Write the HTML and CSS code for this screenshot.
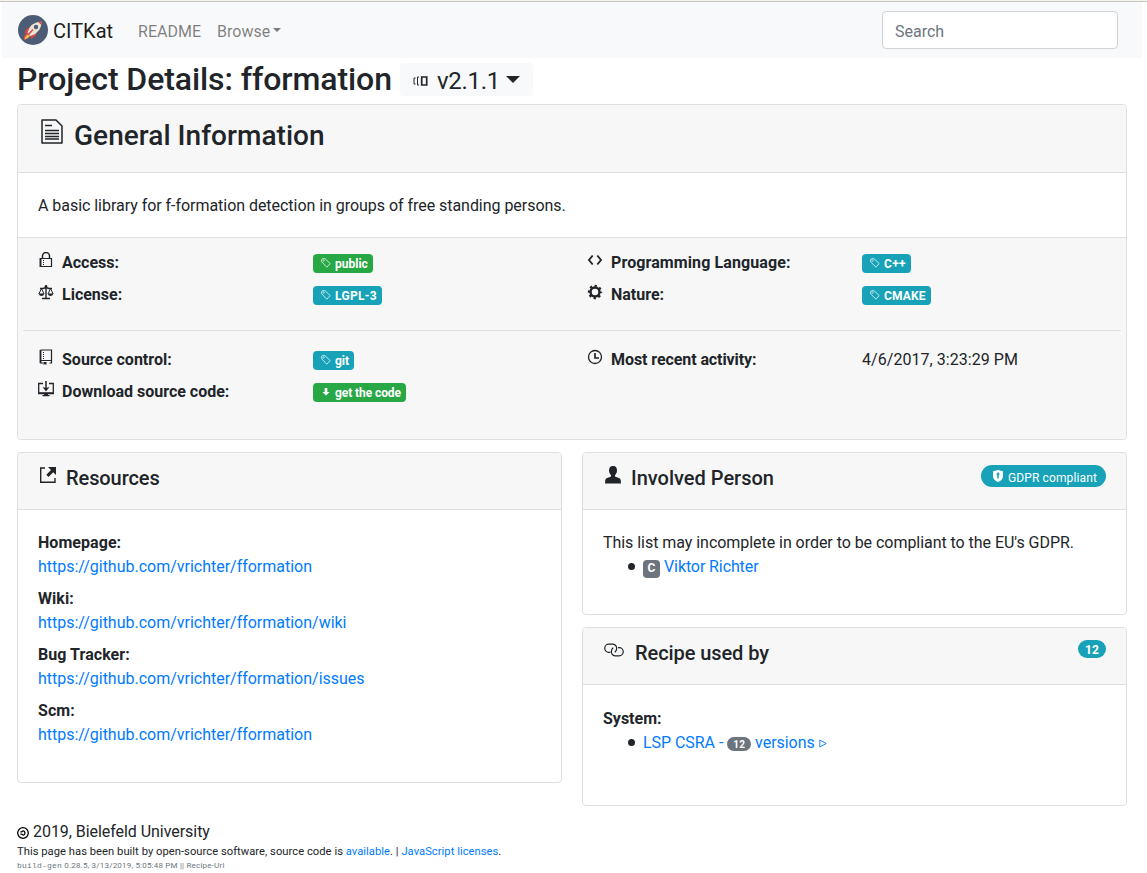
FILE: index.html
```html
<!DOCTYPE html>
<html lang="en">
<head>
<meta charset="utf-8">
<title>CITKat - fformation</title>
<link rel="stylesheet" href="styles.css">
</head>
<body>
<svg class="defs" aria-hidden="true">
  <symbol id="tag" viewBox="0 0 10 10"><path d="M.7 3.8V1.7Q.7.7 1.7.7H4L9.2 5.6 5.8 9.2Z" fill="none" stroke="currentColor" stroke-width=".75"/><circle cx="2.6" cy="2.6" r=".7" fill="none" stroke="currentColor" stroke-width=".5"/></symbol>
</svg>
<nav class="navbar">
  <a class="brand"><svg class="logo" viewBox="0 0 30 30"><circle cx="15" cy="15" r="15" fill="#4c5c75"/><path d="M13 11 8 14.500 6.500 19 12 16.500ZM19 17 17.500 21 12.500 24 13.500 19Z" fill="#d8464c"/><path d="M10 17Q5 20 6 25 11 24 13 20Z" fill="#d8464c"/><path d="M10.500 19Q7 21 6.500 24.500 10 23.500 12 21Z" fill="#f4c04e"/><path d="M9.500 18Q12 7 23.500 6.500 24 17 12.500 21Z" fill="#e8e5d3"/><path d="M20 7 23.800 6.300 23.500 10Z" fill="#d8464c"/><circle cx="18" cy="12" r="2.200" fill="#4c5c75"/><path d="M10 20 15 14.500" stroke="#d8464c" stroke-width="1.500"/></svg>CITKat</a>
  <a class="nav-link">README</a>
  <a class="nav-link">Browse<i class="caret"></i></a>
  <input class="search" placeholder="Search" aria-label="Search">
</nav>
<main class="container">
  <div class="title-row">
    <h1>Project Details: fformation</h1>
    <button class="version"><svg class="ver-icon" viewBox="0 0 15 12"><path d="M8.700 2h5v8h-5z" fill="none" stroke="currentColor" stroke-width="1.700"/><path d="M6 2H4.500v8H6M2.500 3H1v6h1.500" fill="none" stroke="currentColor"/></svg>v2.1.1<i class="caret big"></i></button>
  </div>

  <section class="card general">
    <header class="card-header large"><svg class="doc" viewBox="0 0 22 25"><path d="M1 1h14l6 6v17H1z" fill="none" stroke="currentColor" stroke-width="1.500" stroke-linejoin="round"/><path d="M4 6.500h7M4 11.500h14M4 14.500h14M4 17.500h14M4 20h14" stroke="currentColor" stroke-width="1.400"/></svg><h2>General Information</h2></header>
    <p class="description">A basic library for f-formation detection in groups of free standing persons.</p>
    <div class="facts">
      <div class="fact-grid">
        <div class="label"><svg class="ico" viewBox="0 0 16 16"><path d="M2.500 6.500h11v8h-11z" fill="none" stroke="currentColor" stroke-width="1.200"/><path d="M4.500 6V4a3.500 3.500 0 0 1 7 0v2" fill="none" stroke="currentColor" stroke-width="1.500"/><path d="M2.500 6v9" stroke="currentColor" stroke-width="1.800"/><path d="M5.500 8v6" stroke="currentColor" stroke-dasharray="1 1"/></svg>Access:</div>
        <div><span class="badge green"><svg><use href="#tag"/></svg>public</span></div>
        <div class="label"><svg class="ico" viewBox="0 0 16 16"><path d="M5.700 3.500 2 8l3.700 4.500M10.300 3.500 14 8l-3.700 4.500" fill="none" stroke="currentColor" stroke-width="1.900"/></svg><span class="wide">Programming Language:</span></div>
        <div><span class="badge cpp"><svg><use href="#tag"/></svg>C++</span></div>
        <div class="label"><svg class="ico" viewBox="0 0 16 16"><path d="M8 1v13M4 14.500h8M2 4.500h3l3-1 3 1h3" fill="none" stroke="currentColor" stroke-width="1.400"/><circle cx="8" cy="2.700" r="1.400" fill="currentColor"/><path d="M3.500 4.500.8 10M3.500 4.500 6 10M12.500 4.500 10 10M12.500 4.500 15.200 10" fill="none" stroke="currentColor"/><path d="M.5 9.500h6Q5.500 12 3.500 12T.5 9.500M9.500 9.500h6Q14.500 12 12.500 12T9.500 9.500" fill="currentColor"/></svg>License:</div>
        <div><span class="badge lgpl"><svg><use href="#tag"/></svg>LGPL-3</span></div>
        <div class="label"><svg class="ico" viewBox="0 0 16 16"><circle cx="8" cy="8" r="4.500" fill="none" stroke="currentColor" stroke-width="2.500"/><circle cx="8" cy="8" r="6" fill="none" stroke="currentColor" stroke-width="2.400" stroke-dasharray="2.300 2.412" stroke-dashoffset="1.150"/></svg>Nature:</div>
        <div><span class="badge cmake"><svg><use href="#tag"/></svg>CMAKE</span></div>
      </div>
      <hr>
      <div class="fact-grid">
        <div class="label"><svg class="ico" viewBox="0 0 16 16"><path d="M2.500 1h11v13h-2M5 14H2.500V1M2.500 11.500h11" fill="none" stroke="currentColor" stroke-width="1.200"/><path d="M2.500 1v13" stroke="currentColor" stroke-width="1.700"/><path d="M5.500 3v7" stroke="currentColor" stroke-dasharray="1 1"/><path d="M5.500 13h3v3l-1.500-1-1.500 1z" fill="currentColor"/></svg>Source control:</div>
        <div><span class="badge"><svg><use href="#tag"/></svg>git</span></div>
        <div class="label"><svg class="ico" viewBox="0 0 16 16"><circle cx="8" cy="8" r="6.500" fill="none" stroke="currentColor" stroke-width="1.300"/><path d="M8 4v5h4" fill="none" stroke="currentColor" stroke-width="1.700"/></svg><span class="narrow">Most recent activity:</span></div>
        <div class="date">4/6/2017, 3:23:29 PM</div>
        <div class="label"><svg class="ico" viewBox="0 0 16 16"><path d="M5 2.500H.7v10h14.600v-10H11" fill="none" stroke="currentColor" stroke-width="1.300"/><path d="M.7 12.200h14.600" stroke="currentColor" stroke-width="1.800"/><path d="M8 0v8" stroke="currentColor" stroke-width="1.500"/><path d="M4.500 6 8 7l3.500-1L8 10.500zM6 13h4v1h1.500v1.200h-7V14H6z" fill="currentColor"/></svg>Download source code:</div>
        <div><span class="badge green code"><svg viewBox="0 0 10 10"><path d="M3.700 1h2.600v4H8.500L5 8.500 1.500 5h2.200z" fill="currentColor"/></svg>get the code</span></div>
      </div>
    </div>
  </section>

  <div class="columns">
    <section class="card resources">
      <header class="card-header"><svg class="res-icon" viewBox="0 0 18 18"><path d="M6 2H1.700v14.300H16V12" fill="none" stroke="currentColor" stroke-width="1.400"/><path d="M9 1h8v8l-2.800-2.800L9.500 11 7.300 8.700 12 4z" fill="currentColor"/></svg><h3>Resources</h3></header>
      <dl class="card-body">
        <dt>Homepage:</dt><dd><a>https://github.com/vrichter/fformation</a></dd>
        <dt>Wiki:</dt><dd><a>https://github.com/vrichter/fformation/wiki</a></dd>
        <dt>Bug Tracker:</dt><dd><a>https://github.com/vrichter/fformation/issues</a></dd>
        <dt>Scm:</dt><dd><a>https://github.com/vrichter/fformation</a></dd>
      </dl>
    </section>
    <div class="stack">
      <section class="card person">
        <header class="card-header"><svg class="user-icon" viewBox="0 0 18 20"><path d="M9 1c3 0 4 2 4 4.500 0 2-1 3.500-2 4.800v1.200l5 2Q17 14.500 17 18.500H1Q1 14.500 2 13.500l5-2v-1.200C6 9 5 7.500 5 5.500 5 3 6 1 9 1" fill="currentColor"/></svg><h3>Involved Person</h3>
          <span class="pill gdpr"><svg viewBox="0 0 12 12"><path d="M6 0 11 1.300V6Q11 10 6 12 1 10 1 6V1.300z" fill="currentColor"/><path d="M6 2.500v6M4.600 4.200h2.800" stroke="#17a2b8" stroke-width="1.600"/></svg>GDPR compliant</span></header>
        <div class="card-body"><p>This list may incomplete in order to be compliant to the EU's GDPR.</p>
          <ul><li><span class="initial">C</span><a>Viktor Richter</a></li></ul></div>
      </section>
      <section class="card used">
        <header class="card-header"><svg class="link-icon" viewBox="0 0 20 14"><g fill="none" stroke="currentColor" stroke-width="1.200"><path d="M6.500 9.300H4.800A4 4 0 0 1 4.800 1.200h4A4 4 0 0 1 12.500 6.500Q12 8.300 10.800 9.200"/><path d="M14 4.700h1.200a4 4 0 0 1 0 8.100h-4A4 4 0 0 1 7.500 7.500Q8 5.700 9.200 4.800"/></g></svg><h3>Recipe used by</h3><span class="pill count">12</span></header>
        <div class="card-body"><p class="strong">System:</p>
          <ul><li><a>LSP CSRA - <span class="mini">12</span> versions <svg class="tri" viewBox="0 0 8 9"><path d="M.8 1v7L7.200 4.500z" fill="none" stroke="currentColor" stroke-width=".9"/></svg></a></li></ul></div>
      </section>
    </div>
  </div>
</main>
<footer class="footer">
  <p class="copy"><svg viewBox="0 0 12 12"><circle cx="6" cy="6" r="5.300" fill="none" stroke="#000" stroke-width="1.300"/><path d="M3.400 4.800H4.800Q6 3.300 7.400 4.400 8.600 6 7.400 7.600 6 8.700 4.800 7.200H3.400" fill="none" stroke="#000" stroke-width="1.300"/></svg>2019, Bielefeld University</p>
  <p class="built">This page has been built by open-source software, source code is <a>available</a>. | <a>JavaScript licenses</a>.</p>
  <p class="build"><code>build-gen</code> 0.28.5, 3/13/2019, 5:05:48 PM || Recipe-Url</p>
</footer>
</body>
</html>
```
FILE: styles.css
```css
*, *::before { box-sizing: border-box; }
html { overflow: hidden; }
body { margin: 0; padding: 0 5px 0 2px; height: 873px; background: #fff; color: #212529; font: 400 16px/24px Roboto, sans-serif; }
body::before { content: ""; display: block; height: 2px; margin: 0 -5px 0 -2px; background: #f4f3ee; border-bottom: 1px solid #c6c6be; }
h1, h2, h3, p, ul, dl, dd { margin: 0; padding: 0; }
h1, h2, h3 { font-weight: 500; }
a { color: #007bff; text-decoration: none; }
.defs { display: none; }
.navbar { display: flex; align-items: center; height: 56px; padding: 0 24px 0 16px; background: #f8f9fa; }
.brand { display: flex; align-items: center; gap: 5px; margin-right: 17px; padding-top: 2px; font-size: 20px; color: rgba(0,0,0,.9); }
.logo { width: 30px; height: 30px; }
.brand .logo { margin-top: -2px; }
.nav-link { display: flex; align-items: center; padding: 3px 8px 0; color: rgba(0,0,0,.5); }
.caret { width: 0; height: 0; margin: -4px 0 0 3px; border: solid transparent; border-width: 4.8px 4.8px 0; border-top-color: currentColor; }
.caret.big { margin: -4px 0 0 6px; border-width: 7px 7px 0; border-top-color: currentColor; }
.search { width: 236px; height: 38px; margin-left: auto; padding: 8px 12px 6px; border: 1px solid #ced4da; border-radius: 4px; background: #fff; font: 16px/24px Roboto, sans-serif; }
.search::placeholder { color: #6c757d; opacity: 1; }
.container { padding: 0 15px; }
.title-row { display: flex; height: 46px; align-items: flex-start; }
h1 { width: 383px; padding-top: 2px; font-size: 32px; line-height: 38px; letter-spacing: -.08px; white-space: nowrap; }
.version { display: flex; align-items: center; height: 33px; width: 133px; margin-top: 5px; padding: 3px 0 0 13px; border: 0; border-radius: 4px; background: #f8f9fa; color: #212529; font: 24px/30px Roboto, sans-serif; letter-spacing: -.3px; }
.ver-icon { width: 15px; height: 12px; margin: -1px 9px 0 0; }
.card { border: 1px solid #dfdfdf; border-radius: 4px; background: #fff; overflow: hidden; }
.card-header { display: flex; height: 57px; padding: 12px 20px; background: #f7f7f7; border-bottom: 1px solid #dfdfdf; }
.card-header svg { flex: none; }
.card-header.large { height: 68px; }
.general { height: 336px; }
h2 { font-size: 28px; line-height: 34px; padding-top: 2px; letter-spacing: .04px; }
h3 { font-size: 20px; line-height: 24px; padding-top: 1px; letter-spacing: -.08px; }
.person h3 { letter-spacing: 0; }
.doc { width: 22px; height: 25px; margin: 2px 11px 0 3px; }
.description { padding: 21px 20px 19px; height: 64px; letter-spacing: -.04px; }
.facts { height: 203px; padding: 12px 5px; background: #f7f7f7; border-top: 1px solid #dfdfdf; }
.fact-grid { display: grid; grid-template-columns: 275px 274px 275px 1fr; grid-auto-rows: 24px; row-gap: 8px; padding-left: 15px; }
.label { display: flex; padding-top: 1px; font-weight: 700; }
.wide { letter-spacing: .1px; }
.narrow { letter-spacing: -.08px; }
.date { padding-top: 1px; letter-spacing: .05px; }
.ico { width: 16px; height: 16px; margin: 1px 8px 0 0; }
.facts > hr { height: 1px; margin: 24px 0 16px; border: 0; background: #dfdfdf; }
.badge { display: inline-flex; align-items: center; height: 19px; margin-top: 4px; padding: 1px 5px 0; border-radius: 4px; background: #17a2b8; color: #fff; font-size: 12px; line-height: 12px; font-weight: 700; vertical-align: top; }
.badge.green { background: #28a745; }
.badge svg { width: 10px; height: 10px; margin: -3px 4px 0 3px; }
.lgpl, .cpp { letter-spacing: .3px; }
.cmake { letter-spacing: .15px; }
.code { letter-spacing: -.08px; }
.columns { display: grid; grid-template-columns: 545px 545px; gap: 20px; align-items: start; margin-top: 12px; }
.stack { display: grid; gap: 12px; }
.resources { height: 331px; }
.person { height: 163px; }
.used { height: 179px; }
.card-body { padding: 21px 20px 20px; letter-spacing: -.01px; }
.person .card-body { letter-spacing: -.045px; }
.used .card-body { padding-top: 22px; }
.person li { letter-spacing: -.1px; }
dt, .strong { font-weight: 700; }
dt { letter-spacing: .05px; }
dd { margin-bottom: 8px; }
.res-icon { width: 18px; height: 18px; margin: 1px 9px 0 1px; }
.user-icon { width: 18px; height: 20px; margin: 0 9px 0 1px; }
.link-icon { width: 20px; height: 14px; margin: 3px 11px 0 1px; }
ul { padding-left: 40px; list-style: none; }
li::before { content: ""; float: left; width: 7px; height: 7px; margin: 8px 0 0 -15px; border-radius: 50%; background: #212529; }
.pill { display: flex; align-items: center; margin-left: auto; border-radius: 11px; background: #17a2b8; color: #fff; font-size: 12px; line-height: 12px; }
.gdpr { width: 125px; height: 22px; padding: 3px 0 0 11px; letter-spacing: .12px; white-space: nowrap; }
.gdpr svg { width: 12px; height: 12px; margin: -4px 4px 0 0; }
.count { width: 28px; height: 18px; padding-top: 1px; justify-content: center; font-weight: 700; }
.initial { display: inline-block; width: 17px; height: 18px; margin: 5px 4px 0 0; border-radius: 4px; background: #6c757d; color: #fff; font-size: 12px; font-weight: 700; line-height: 17px; text-align: center; vertical-align: top; }
.mini { display: inline-block; width: 24px; height: 14px; margin-top: 6px; border-radius: 7px; background: #6c757d; color: #fff; font-size: 10px; font-weight: 700; line-height: 15px; text-align: center; vertical-align: top; }
.used li { letter-spacing: -.05px; }
.used .mini { letter-spacing: .2px; }
.tri { width: 8px; height: 9px; }
.footer { padding: 14px 15px 0; }
.copy { display: flex; align-items: center; gap: 4px; letter-spacing: -.05px; }
.copy svg { width: 12px; height: 12px; margin-top: 1px; }
.built { font-size: 11.2px; line-height: 16px; letter-spacing: .038px; }
.build { font-size: 8px; line-height: 12px; color: #6c757d; letter-spacing: .2px; }
.build code { font: 8px/12px "Liberation Mono", monospace; }
```
